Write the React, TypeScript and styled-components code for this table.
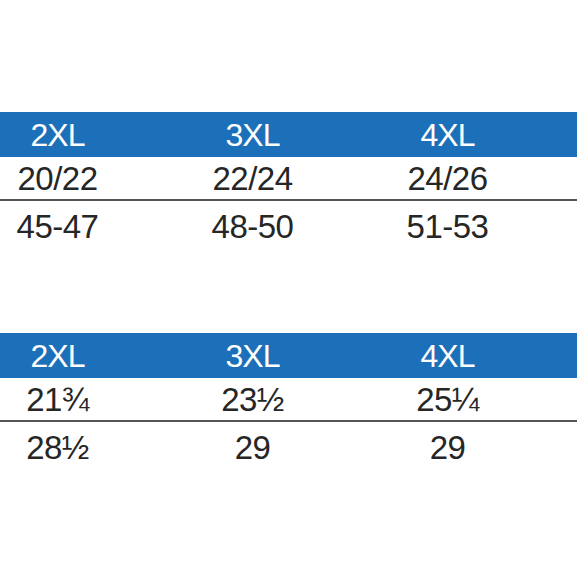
import styled, { createGlobalStyle } from 'styled-components';

interface SizeTableProps {
  sizes: string[];
  rows: string[][];
}

const GlobalStyle = createGlobalStyle`
  html, body {
    margin: 0;
    padding: 0;
    background: #ffffff;
  }
  body {
    font-family: "Liberation Sans", Arial, sans-serif;
    overflow: hidden;
  }
`;

function SizeTable({ sizes, rows }: SizeTableProps) {
  return (
    <Table>
      <HeaderRow>
        {sizes.map((s) => (
          <HeaderCell key={s}>{s}</HeaderCell>
        ))}
      </HeaderRow>
      {rows.map((row, i) => (
        <DataRow key={i} $divided={i > 0}>
          {row.map((v, j) => (
            <DataCell key={j}>{v}</DataCell>
          ))}
        </DataRow>
      ))}
    </Table>
  );
}

export default function App() {
  const sizes = ['2XL', '3XL', '4XL'];
  return (
    <>
      <GlobalStyle />
      <Page>
        <SizeTable
          sizes={sizes}
          rows={[
            ['20/22', '22/24', '24/26'],
            ['45-47', '48-50', '51-53'],
          ]}
        />
        <SizeTable
          sizes={sizes}
          rows={[
            ['21¾', '23½', '25¼'],
            ['28½', '29', '29'],
          ]}
        />
      </Page>
    </>
  );
}

const Page = styled.div`
  width: 580px;
  height: 580px;
  padding-top: 112px;
  box-sizing: border-box;
  display: flex;
  flex-direction: column;
  gap: 86px;
  overflow: hidden;
`;

// the chart is cropped on the left, so the table starts off-screen
const Table = styled.div`
  width: 617px;
  margin-left: -40px;
  display: flex;
  flex-direction: column;
`;

const HeaderRow = styled.div`
  display: grid;
  grid-template-columns: 195px 195px 195px 1fr;
  height: 45px;
  align-items: center;
  background: #1c70b9;
`;

const HeaderCell = styled.div`
  text-align: center;
  color: #ffffff;
  font-size: 32px;
  letter-spacing: -1px;
  line-height: 1;
`;

const DataRow = styled.div<{ $divided?: boolean }>`
  display: grid;
  grid-template-columns: 195px 195px 195px 1fr;
  align-items: center;
  height: ${(p) => (p.$divided ? '48px' : '42px')};
  border-top: ${(p) => (p.$divided ? '2px solid #555555' : 'none')};
  box-sizing: border-box;
  padding-top: ${(p) => (p.$divided ? '4px' : '0')};
`;

const DataCell = styled.div`
  text-align: center;
  color: #262626;
  font-size: 33px;
  letter-spacing: -0.5px;
  line-height: 1;
`;
